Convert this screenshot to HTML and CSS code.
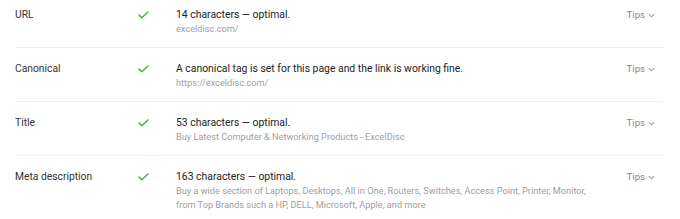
FILE: index.html
```html
<!DOCTYPE html>
<html>
<head>
<meta charset="utf-8">
<link rel="stylesheet" href="styles.css">
</head>
<body>
<div class="list">
  <div class="row">
    <div class="label">URL</div>
    <div class="status"><svg class="check" viewBox="0 0 12 9" width="11" height="8"><path d="M1 4.6 L4.2 7.6 L11 1.2" fill="none" stroke="#4caf50" stroke-width="1.7" stroke-linecap="round" stroke-linejoin="round"/></svg></div>
    <div class="info">
      <div class="main">14 characters — optimal.</div>
      <div class="sub">exceldisc.com/</div>
    </div>
    <div class="tips">Tips <svg class="chev" viewBox="0 0 8 5" width="7" height="5"><path d="M0.8 0.8 L4 4 L7.2 0.8" fill="none" stroke="#9e9e9e" stroke-width="1.2"/></svg></div>
  </div>
  <div class="row">
    <div class="label">Canonical</div>
    <div class="status"><svg class="check" viewBox="0 0 12 9" width="11" height="8"><path d="M1 4.6 L4.2 7.6 L11 1.2" fill="none" stroke="#4caf50" stroke-width="1.7" stroke-linecap="round" stroke-linejoin="round"/></svg></div>
    <div class="info">
      <div class="main">A canonical tag is set for this page and the link is working fine.</div>
      <div class="sub">https://exceldisc.com/</div>
    </div>
    <div class="tips">Tips <svg class="chev" viewBox="0 0 8 5" width="7" height="5"><path d="M0.8 0.8 L4 4 L7.2 0.8" fill="none" stroke="#9e9e9e" stroke-width="1.2"/></svg></div>
  </div>
  <div class="row">
    <div class="label">Title</div>
    <div class="status"><svg class="check" viewBox="0 0 12 9" width="11" height="8"><path d="M1 4.6 L4.2 7.6 L11 1.2" fill="none" stroke="#4caf50" stroke-width="1.7" stroke-linecap="round" stroke-linejoin="round"/></svg></div>
    <div class="info">
      <div class="main">53 characters — optimal.</div>
      <div class="sub">Buy Latest Computer &amp; Networking Products - ExcelDisc</div>
    </div>
    <div class="tips">Tips <svg class="chev" viewBox="0 0 8 5" width="7" height="5"><path d="M0.8 0.8 L4 4 L7.2 0.8" fill="none" stroke="#9e9e9e" stroke-width="1.2"/></svg></div>
  </div>
  <div class="row">
    <div class="label">Meta description</div>
    <div class="status"><svg class="check" viewBox="0 0 12 9" width="11" height="8"><path d="M1 4.6 L4.2 7.6 L11 1.2" fill="none" stroke="#4caf50" stroke-width="1.7" stroke-linecap="round" stroke-linejoin="round"/></svg></div>
    <div class="info">
      <div class="main">163 characters — optimal.</div>
      <div class="sub">Buy a wide section of Laptops, Desktops, All in One, Routers, Switches, Access Point, Printer, Monitor,<br>from Top Brands such a HP, DELL, Microsoft, Apple, and more</div>
    </div>
    <div class="tips">Tips <svg class="chev" viewBox="0 0 8 5" width="7" height="5"><path d="M0.8 0.8 L4 4 L7.2 0.8" fill="none" stroke="#9e9e9e" stroke-width="1.2"/></svg></div>
  </div>
</div>
</body>
</html>
```
FILE: styles.css
```css
html, body {
  margin: 0;
  padding: 0;
  background: #fff;
}
body {
  font-family: Roboto, "Liberation Sans", Arial, sans-serif;
  color: #333;
  overflow: hidden;
}
.list {
  margin: -6px 17px 0 15px;
}
.row {
  display: flex;
  align-items: flex-start;
  box-sizing: border-box;
  min-height: 54px;
  padding: 13px 0 7px;
  border-bottom: 1px solid #eeeeee;
}
.label {
  width: 123px;
  flex: none;
  font-size: 10.3px;
  line-height: 16px;
  color: #333;
}
.status {
  width: 38px;
  flex: none;
  height: 16px;
  display: flex;
  align-items: center;
}
.check {
  display: block;
}
.info {
  flex: 1;
  min-width: 0;
}
.main {
  font-size: 10.4px;
  line-height: 16px;
  color: #222;
}
.sub {
  font-size: 9.2px;
  line-height: 14px;
  margin-top: -1px;
  color: #a0a0a0;
}
.tips {
  flex: none;
  display: flex;
  align-items: center;
  gap: 3px;
  padding-right: 8px;
  font-size: 9.6px;
  line-height: 16px;
  color: #888;
}
.chev {
  display: block;
  margin-top: 1px;
}
```
